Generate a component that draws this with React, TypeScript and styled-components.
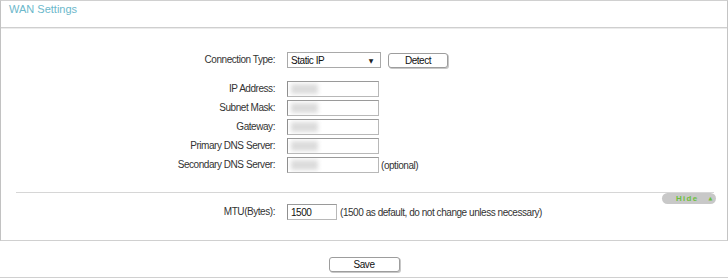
import React from "react";
import styled, { createGlobalStyle } from "styled-components";

const Global = createGlobalStyle`
  html, body { margin: 0; padding: 0; background: #fff; }
  body {
    width: 728px;
    font-family: "Liberation Sans", Arial, sans-serif;
    font-size: 10px;
    letter-spacing: -0.45px;
    color: #333;
  }
`;

const Page = styled.div`
  width: 728px;
  display: flex;
  flex-direction: column;
`;

const Panel = styled.section`
  border: 1px solid #d0d0d0;
  border-left-color: #c2c2c2;
  border-right-color: #c4c4c4;
  display: flex;
  flex-direction: column;
  padding-bottom: 20px;
`;

const Header = styled.header`
  height: 26px;
  border-bottom: 1px solid #cfcfcf;
  box-shadow: 0 1px 0 #ececec;
  padding-left: 8px;
  display: flex;
  align-items: flex-start;
`;

const Title = styled.h2`
  margin: 2px 0 0;
  font-family: "Liberation Sans", Arial, sans-serif;
  font-weight: normal;
  font-size: 11px;
  letter-spacing: 0;
  color: #6cb8cb;
`;

const Form = styled.div`
  display: grid;
  grid-template-columns: 274px auto;
  column-gap: 12px;
  row-gap: 3px;
  align-items: center;
  margin-top: 24px;
`;

const Label = styled.label<{ $gapAfter?: boolean }>`
  text-align: right;
  line-height: 16px;
  margin-bottom: ${(p) => (p.$gapAfter ? "10px" : "0")};
`;

const Field = styled.div<{ $gapAfter?: boolean }>`
  display: flex;
  align-items: center;
  gap: 7px;
  height: 16px;
  margin-bottom: ${(p) => (p.$gapAfter ? "10px" : "0")};
`;

const Select = styled.div`
  width: 82px;
  height: 14px;
  border: 1px solid #a9a9a9;
  background: #fff;
  display: flex;
  align-items: center;
  justify-content: space-between;
  padding: 0 7px 0 3px;
  box-sizing: content-box;
  color: #111;
`;

const Arrow = styled.span`
  font-size: 6px;
  color: #222;
  font-family: "DejaVu Sans", sans-serif;
`;

const Button = styled.button<{ $width: number }>`
  width: ${(p) => p.$width}px;
  height: 15px;
  padding: 0;
  border: 1px solid #9d9d9d;
  border-radius: 3px;
  background: #fff;
  box-shadow: 1px 1px 0 #c8c8c8;
  font-family: "Liberation Sans", Arial, sans-serif;
  font-size: 10px;
  letter-spacing: -0.45px;
  color: #111;
  line-height: 13px;
`;

const Input = styled.div<{ $width: number }>`
  width: ${(p) => p.$width}px;
  height: 16px;
  box-sizing: border-box;
  border: 1px solid #b8b8b8;
  border-left-color: #8f8f8f;
  border-top-color: #9a9a9a;
  background: #fff;
  display: flex;
  align-items: center;
  padding-left: 3px;
  color: #111;
  overflow: hidden;
`;

const Blurred = styled.span`
  display: block;
  width: 27px;
  height: 10px;
  background: #dcdcdc;
  filter: blur(2px);
`;

const Note = styled.span<{ $shift: number }>`
  color: #333;
  margin-left: ${(p) => p.$shift}px;
`;

const Divider = styled.hr`
  border: 0;
  border-top: 1px solid #d6d6d6;
  margin: 19px 13px 0 15px;
`;

const ToggleRow = styled.div`
  display: flex;
  justify-content: flex-end;
  padding-right: 11px;
`;

const Pill = styled.div`
  width: 54px;
  height: 11px;
  border-radius: 6px;
  background: #c8c8c8;
  display: flex;
  align-items: center;
  gap: 10px;
  padding-left: 14px;
  box-sizing: border-box;
  font-family: "Liberation Sans", Arial, sans-serif;
  font-size: 8px;
  line-height: 11px;
  font-weight: bold;
  letter-spacing: 1.3px;
  color: #6cbf3c;
`;

const PillArrow = styled.span`
  display: flex;
  align-items: center;
  height: 11px;
  font-size: 5px;
  line-height: 1;
  letter-spacing: 0;
  font-family: "DejaVu Sans", sans-serif;
`;

const MtuForm = styled(Form)`
  margin-top: 0;
`;

const Footer = styled.footer`
  height: 37px;
  box-sizing: border-box;
  border-bottom: 1px solid #d0d0d0;
  display: flex;
  justify-content: center;
  align-items: flex-start;
  padding-top: 16px;
`;

const rows = [
  "IP Address:",
  "Subnet Mask:",
  "Gateway:",
  "Primary DNS Server:",
  "Secondary DNS Server:",
];

export default function App() {
  return (
    <Page>
      <Global />
      <Panel>
        <Header>
          <Title>WAN Settings</Title>
        </Header>
        <Form>
          <Label $gapAfter>Connection Type:</Label>
          <Field $gapAfter>
            <Select>
              <span>Static IP</span>
              <Arrow>▼</Arrow>
            </Select>
            <Button $width={60}>Detect</Button>
          </Field>
          {rows.map((r, i) => (
            <React.Fragment key={r}>
              <Label>{r}</Label>
              <Field>
                <Input $width={92}>
                  <Blurred />
                </Input>
                {i === rows.length - 1 && <Note $shift={-5}>(optional)</Note>}
              </Field>
            </React.Fragment>
          ))}
        </Form>
        <Divider />
        <ToggleRow>
          <Pill>
            <span>Hide</span>
            <PillArrow>▲</PillArrow>
          </Pill>
        </ToggleRow>
        <MtuForm>
          <Label>MTU(Bytes):</Label>
          <Field>
            <Input $width={50}>1500</Input>
            <Note $shift={-4}>(1500 as default, do not change unless necessary)</Note>
          </Field>
        </MtuForm>
      </Panel>
      <Footer>
        <Button $width={71}>Save</Button>
      </Footer>
    </Page>
  );
}
